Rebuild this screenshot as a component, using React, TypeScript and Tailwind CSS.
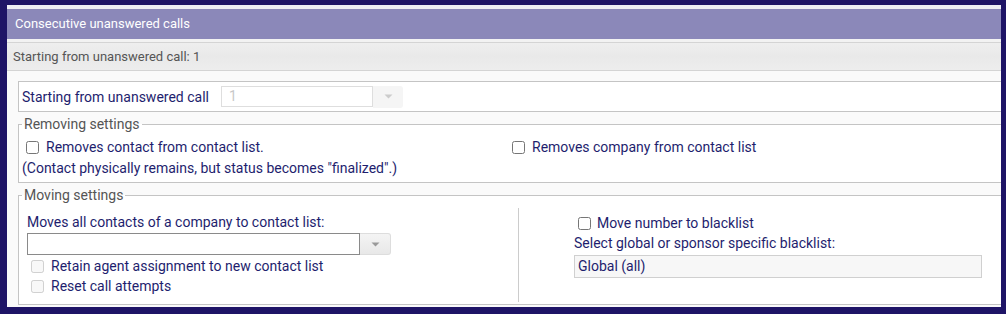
import React from "react";

function Caret({ color }: { color: string }) {
  return (
    <svg width="9" height="5" viewBox="0 0 9 5">
      <path d="M0.5 0.5 L8.5 0.5 L4.5 4.5 Z" fill={color} />
    </svg>
  );
}

export default function App() {
  const font = { fontFamily: "Roboto, 'Liberation Sans', sans-serif" };
  return (
    <div
      className="w-[1006px] h-[314px] bg-[#1e1466] pt-[5px] pl-[7px] pr-[5px] pb-[7px] overflow-hidden"
      style={font}
    >
      <div className="h-full w-full bg-[#fafafa] overflow-hidden flex flex-col">
        <div className="h-[4px] bg-[#eeeef5] shrink-0" />
        <div className="h-[30px] shrink-0 bg-[#8b88b9] text-white text-[13px] leading-[30px] pl-[8px]">
          Consecutive unanswered calls
        </div>
        <div className="h-[3px] shrink-0 bg-[#f2f2f2]" />
        <div className="h-[29px] shrink-0 border-y border-[#d4d4d4] bg-gradient-to-b from-[#eeeeee] via-[#e9e9e9] to-[#ededed] text-[#555] text-[13px] leading-[27px] pl-[6px]">
          Starting from unanswered call: 1
        </div>
        <div className="pl-[11px] pt-[10px] text-[#1e1e6e] text-[14px]">
          <div className="w-[1100px] h-[31px] border border-[#c4c4c4] bg-white flex items-center pl-[3px]">
            <span className="w-[199px] leading-[20px]">Starting from unanswered call</span>
            <div className="w-[152px] h-[21px] border border-[#dedede] bg-white text-[#c8c8c8] leading-[19px] pl-[7px]">
              1
            </div>
            <div className="w-[30px] h-[22px] bg-[#f5f5f5] rounded-r-[3px] flex items-center justify-center">
              <Caret color="#cccccc" />
            </div>
          </div>

          <fieldset className="w-[1100px] mt-[4px] border border-[#c4c4c4] bg-white pl-[3px] pt-[5px] pb-[3px]">
            <legend className="px-[2px] text-[#555] leading-[16px]">Removing settings</legend>
            <div className="flex">
              <div className="w-[486px]">
                <label className="flex items-center h-[21px]">
                  <input type="checkbox" className="ml-[4px] mr-[7px] w-[13px] h-[13px]" />
                  Removes contact from contact list.
                </label>
                <div className="h-[21px] leading-[21px]">
                  (Contact physically remains, but status becomes "finalized".)
                </div>
              </div>
              <div>
                <label className="flex items-center h-[21px]">
                  <input type="checkbox" className="ml-[4px] mr-[7px] w-[13px] h-[13px]" />
                  Removes company from contact list
                </label>
              </div>
            </div>
          </fieldset>

          <fieldset className="w-[1100px] mt-[4px] border border-[#c4c4c4] bg-white pl-[3px] pt-[5px] pb-[2px]">
            <legend className="px-[2px] text-[#555] leading-[16px]">Moving settings</legend>
            <div className="flex">
              <div className="w-[497px] border-r border-[#cccccc] pl-[5px] pt-[4px] pb-[6px]">
                <div className="leading-[20px]">Moves all contacts of a company to contact list:</div>
                <div className="flex mt-[1px]">
                  <div className="w-[333px] h-[22px] border border-[#8a8a8a] bg-white" />
                  <div className="w-[31px] h-[22px] bg-gradient-to-b from-[#f4f4f4] to-[#e8e8e8] border border-[#dddddd] border-l-0 rounded-r-[3px] flex items-center justify-center">
                    <Caret color="#999999" />
                  </div>
                </div>
                <label className="flex items-center h-[20px] mt-[1px]">
                  <input type="checkbox" disabled className="ml-[4px] mr-[7px] w-[13px] h-[13px]" />
                  Retain agent assignment to new contact list
                </label>
                <label className="flex items-center h-[20px]">
                  <input type="checkbox" disabled className="ml-[4px] mr-[7px] w-[13px] h-[13px]" />
                  Reset call attempts
                </label>
              </div>
              <div className="pl-[55px] pt-[5px]">
                <label className="flex items-center h-[20px]">
                  <input type="checkbox" className="ml-[4px] mr-[6px] w-[13px] h-[13px]" />
                  Move number to blacklist
                </label>
                <div className="leading-[20px]">Select global or sponsor specific blacklist:</div>
                <div className="mt-[2px] w-[408px] h-[23px] border border-[#d0d0d0] bg-[#f7f7f7] leading-[21px] pl-[3px]">
                  Global (all)
                </div>
              </div>
            </div>
          </fieldset>
        </div>
      </div>
    </div>
  );
}
